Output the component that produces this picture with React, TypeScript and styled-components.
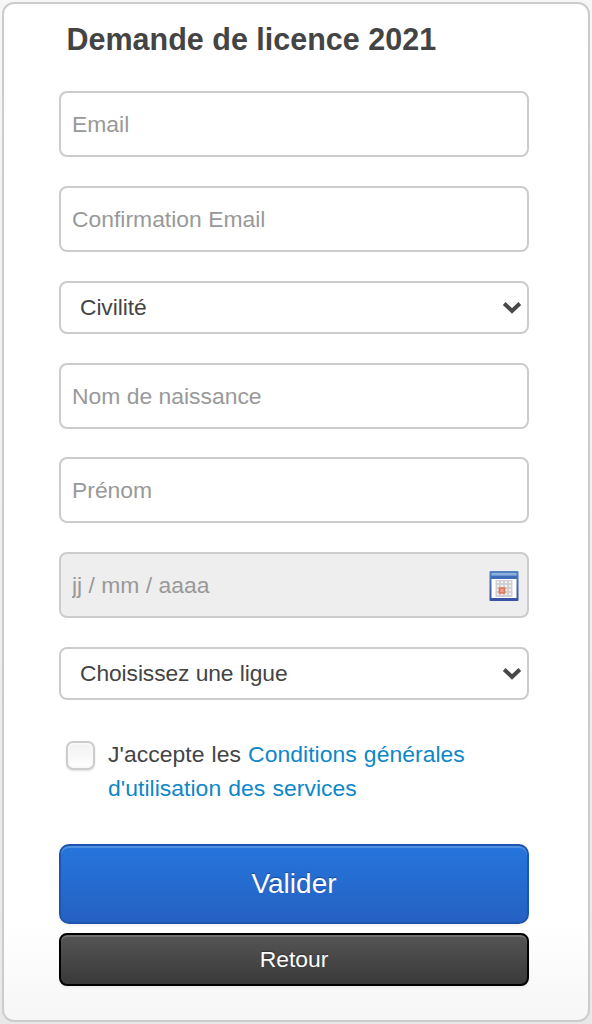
import React from 'react';
import styled, { createGlobalStyle, css } from 'styled-components';

const GlobalStyle = createGlobalStyle`
  *, *::before, *::after { box-sizing: border-box; }
  body {
    margin: 0;
    background: linear-gradient(#f6f6f6, #f0f0f0 50%, #e8e8e8);
    color: #444;
    font-family: "Liberation Sans", Arial, sans-serif;
  }
`;

const Page = styled.main`
  height: 1024px;
  padding: 2px;
`;

const Card = styled.form`
  display: flex;
  flex-direction: column;
  height: 1020px;
  padding: 15px 59px 0 55px;
  border: 2px solid #ccc;
  border-radius: 12px;
  background: linear-gradient(#fff 0, #fff 920px, #f6f6f6 100%);
`;

const Title = styled.h1`
  margin: 0 0 32.2px;
  padding-left: 7.5px;
  font-size: 30.5px;
  line-height: 40px;
  color: #444;
`;

const Fields = styled.div`
  display: flex;
  flex-direction: column;
  gap: 28.8px;
`;

const control = css`
  display: block;
  width: 100%;
  margin: 0;
  border: 2px solid #ccc;
  border-radius: 8px;
  background: #fff;
  font: 22.9px "Liberation Sans", Arial, sans-serif;
  outline: none;
`;

const Input = styled.input`
  ${control}
  height: 66px;
  padding: 1px 11px 0;
  color: #444;
  &::placeholder { color: #999; opacity: 1; }
  &:read-only { background: #eee; }
`;

const Anchor = styled.div`
  position: relative;
`;

const Select = styled.select`
  ${control}
  height: 53px;
  padding: 0 40px 1px 19px;
  color: #444;
  font-size: 22.8px;
  letter-spacing: -0.08px;
  appearance: none;
`;

const Chevron = styled.svg`
  position: absolute;
  right: 7px;
  top: 20px;
  pointer-events: none;
`;

const Calendar = styled.svg`
  position: absolute;
  right: 10px;
  top: 18px;
`;

const Terms = styled.label`
  display: flex;
  gap: 12px;
  margin: 38px 0 38px;
  padding-left: 7px;
  font-size: 22.9px;
  letter-spacing: 0.05px;
  word-spacing: 0.7px;
  line-height: 34px;
  color: #444;
`;

const TermsText = styled.span`
  margin-top: -1px;
`;

const Checkbox = styled.input`
  appearance: none;
  flex: none;
  width: 29px;
  height: 29px;
  margin: 3px 1px 0 0;
  border: 2px solid #ccc;
  border-radius: 7px;
  background: linear-gradient(#f1f1f1, #fff);
  box-shadow: inset 0 0 0 2px #f8f8f8, 0 1px 2px #0002;
`;

const Link = styled.a`
  color: #0d87c9;
  text-decoration: none;
`;

const Button = styled.button<{ $primary?: boolean }>`
  display: block;
  width: 100%;
  height: ${p => (p.$primary ? 80 : 53)}px;
  margin: ${p => (p.$primary ? 1 : 0)}px 0 9px;
  padding: 0;
  border: 2px solid ${p => (p.$primary ? '#1d55ae' : '#000')};
  border-radius: ${p => (p.$primary ? 10 : 8)}px;
  background: ${p => (p.$primary ? 'linear-gradient(#2575dc, #2561c3)' : 'linear-gradient(#555, #393939)')};
  box-shadow: inset 0 2px 0 ${p => (p.$primary ? '#5290e1' : '#717171')}, 0 2px 3px #0000000d;
  font: ${p => (p.$primary ? 28 : 22.9)}px "Liberation Sans", Arial, sans-serif;
  color: #fff;
  text-shadow: 0 -1px 1px #0005;
`;

const Arrow = () => (
  <Chevron width="20" height="14" viewBox="0 0 20 14" fill="none">
    <path d="M2.200 2.500 10 9.900l7.800-7.400" stroke="#484848" strokeWidth="4" />
  </Chevron>
);

const CalendarIcon = () => (
  <Calendar width="30" height="32" viewBox="0 0 30 32">
    <defs>
      <linearGradient id="frame" x2="0" y2="1">
        <stop stopColor="#5480c2" />
        <stop offset="1" stopColor="#3851a4" />
      </linearGradient>
    </defs>
    <rect x="0.500" y="1" width="29" height="30" rx="1" fill="url(#frame)" />
    <path d="M2.500 3h25v2.500h-25z" fill="#8cb1dc" />
    <path d="M2.500 6h25v3h-25z" fill="#3f6bb8" />
    <path d="M2.500 9h25v19h-25z" fill="#fff" />
    <path d="M6.500 10h17v17h-17z" fill="#d0d0d0" />
    <path
      d="M8 11h2v2H8zm4 0h2v2h-2zm4 0h2v2h-2zm4 0h2v2h-2zM8 15h2v2H8zm4 0h2v2h-2zm4 0h2v2h-2zm4 0h2v2h-2zM8 19h2v2H8zm8 0h2v2h-2zm4 0h2v2h-2zM8 23h2v2H8zm4 0h2v2h-2zm4 0h2v2h-2zm4 0h2v2h-2z"
      fill="#f1f1f1"
    />
    <path d="M10.500 18h5v5h-5z" fill="#eda38f" stroke="#df7458" strokeWidth="1.700" />
  </Calendar>
);

const Choice = ({ label }: { label: string }) => (
  <Anchor>
    <Select aria-label={label}>
      <option>{label}</option>
    </Select>
    <Arrow />
  </Anchor>
);

export default function App() {
  return (
    <>
      <GlobalStyle />
      <Page>
        <Card>
          <Title>Demande de licence 2021</Title>
          <Fields>
            <Input placeholder="Email" />
            <Input placeholder="Confirmation Email" />
            <Choice label="Civilité" />
            <Input placeholder="Nom de naissance" />
            <Input placeholder="Prénom" />
            <Anchor>
              <Input placeholder="jj / mm / aaaa" readOnly />
              <CalendarIcon />
            </Anchor>
            <Choice label="Choisissez une ligue" />
          </Fields>
          <Terms>
            <Checkbox type="checkbox" />
            <TermsText>
              J'accepte les <Link href="#">Conditions générales<br />d'utilisation des services</Link>
            </TermsText>
          </Terms>
          <Button type="button" $primary>Valider</Button>
          <Button type="button">Retour</Button>
        </Card>
      </Page>
    </>
  );
}
